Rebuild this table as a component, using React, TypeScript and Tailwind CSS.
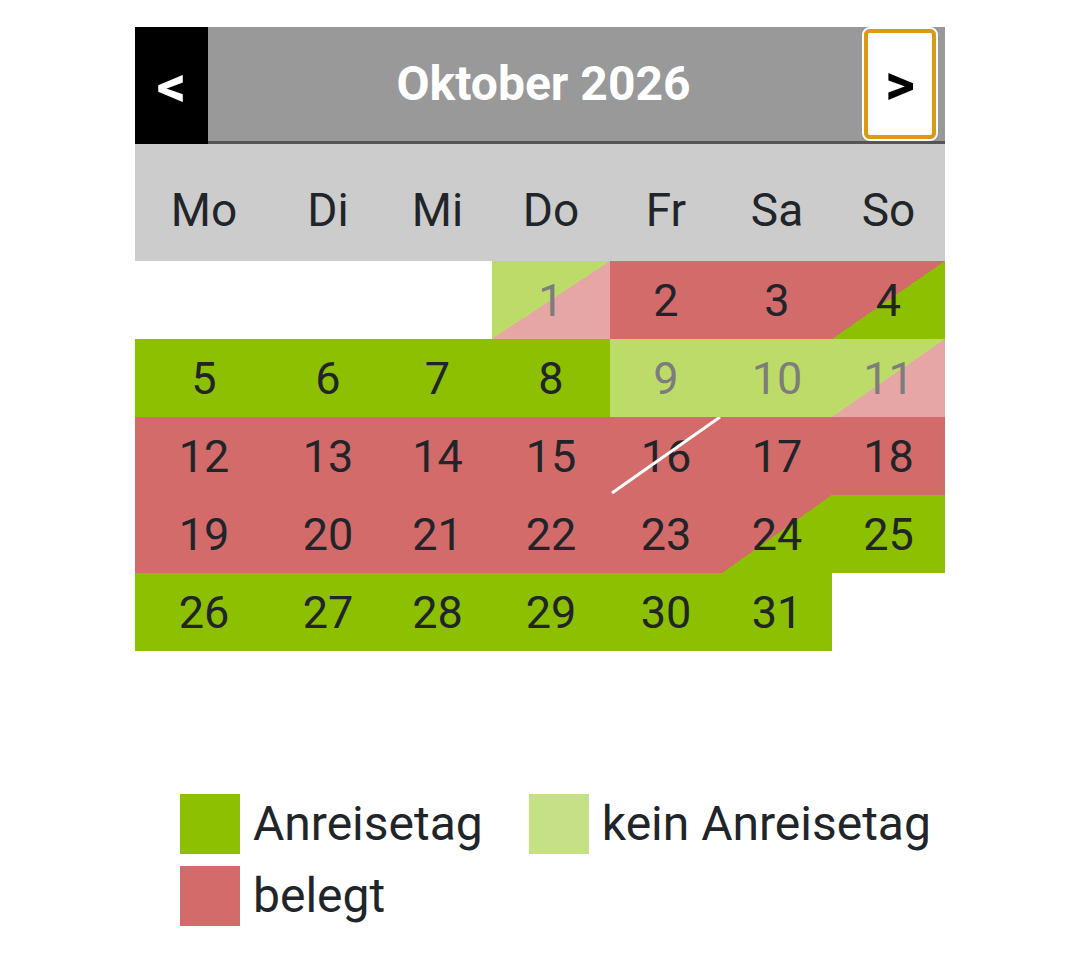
const days = ["Mo", "Di", "Mi", "Do", "Fr", "Sa", "So"];

type Kind = "e" | "a" | "n" | "b" | "nl" | "ba" | "x";

const cellStyle: Record<Kind, string> = {
  e: "bg-white",
  a: "bg-[#8cc000] text-[#212529]",
  n: "bg-[#bddb69] text-[#7d7d7d]",
  b: "bg-[#d46b6b] text-[#212529]",
  nl: "bg-[linear-gradient(to_bottom_right,#bddb69_50%,#e6a6a6_50%)] text-[#7d7d7d]",
  ba: "bg-[linear-gradient(to_bottom_right,#d46b6b_50%,#8cc000_50%)] text-[#212529]",
  x: "bg-[#d46b6b] text-[#212529]",
};

const weeks: [number | null, Kind][][] = [
  [[null, "e"], [null, "e"], [null, "e"], [1, "nl"], [2, "b"], [3, "b"], [4, "ba"]],
  [[5, "a"], [6, "a"], [7, "a"], [8, "a"], [9, "n"], [10, "n"], [11, "nl"]],
  [[12, "b"], [13, "b"], [14, "b"], [15, "b"], [16, "x"], [17, "b"], [18, "b"]],
  [[19, "b"], [20, "b"], [21, "b"], [22, "b"], [23, "b"], [24, "ba"], [25, "a"]],
  [[26, "a"], [27, "a"], [28, "a"], [29, "a"], [30, "a"], [31, "a"], [null, "e"]],
];

const cols = "grid grid-cols-[138px_110px_109px_118px_112px_110px_113px]";

function Legend({ color, label }: { color: string; label: string }) {
  return (
    <div className="flex items-center gap-[13px]">
      <span className={`h-[60px] w-[60px] ${color}`} />
      <span className="text-[48px] leading-none text-[#212529]">{label}</span>
    </div>
  );
}

export default function App() {
  return (
    <div className="min-h-[962px] bg-white pl-[135px] pt-[27px] font-['Roboto',sans-serif]">
      <div className="w-[810px]">
        <div className="flex h-[117px]">
          <div className="flex w-[73px] items-center justify-center bg-black text-[58px] font-bold leading-none text-white">
            &lt;
          </div>
          <div className="flex flex-1 border-b-[3px] border-[#555555] bg-[#999999]">
            <div className="flex flex-1 items-center justify-center pl-[17px] text-[48px] font-bold leading-none text-white">
              Oktober 2026
            </div>
            <div className="mr-[7px] rounded-[8px] border-[2px] border-white">
              <div className="flex h-[110px] w-[72px] items-center justify-center rounded-[6px] border-[4px] border-[#dc9a12] bg-white text-[58px] font-bold leading-none text-black">
                &gt;
              </div>
            </div>
          </div>
        </div>
        <div className={`${cols} h-[117px] bg-[#cccccc]`}>
          {days.map((d) => (
            <div key={d} className="flex items-center justify-center pt-[14px] text-[46px] leading-none text-[#212529]">
              {d}
            </div>
          ))}
        </div>
        {weeks.map((week, i) => (
          <div key={i} className={`${cols} h-[78px]`}>
            {week.map(([n, kind], j) => (
              <div
                key={j}
                className={`relative flex items-center justify-center text-[45px] leading-none ${cellStyle[kind]}`}
              >
                {n}
                {kind === "x" && (
                  <svg className="absolute inset-0 h-full w-full" viewBox="0 0 112 78" preserveAspectRatio="none">
                    <line x1="2" y1="76" x2="110" y2="0" stroke="white" strokeWidth="3" />
                  </svg>
                )}
              </div>
            ))}
          </div>
        ))}
      </div>
      <div className="mt-[143px] ml-[45px] flex w-[765px] flex-wrap gap-x-[46px] gap-y-[12px]">
        <Legend color="bg-[#8cc000]" label="Anreisetag" />
        <Legend color="bg-[#c6e085]" label="kein Anreisetag" />
        <Legend color="bg-[#d46b6b]" label="belegt" />
      </div>
    </div>
  );
}
